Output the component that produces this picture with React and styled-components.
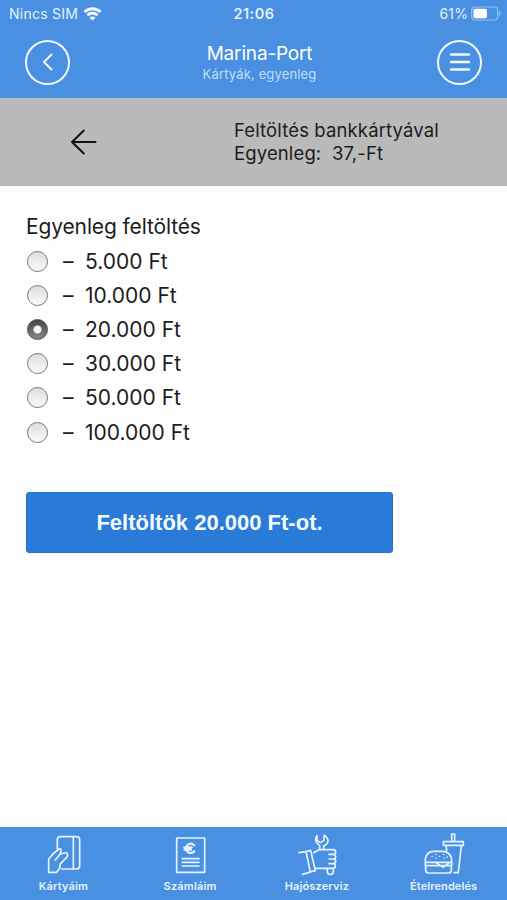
import React, { useState } from 'react';
import styled, { createGlobalStyle } from 'styled-components';

const GlobalStyle = createGlobalStyle`
  *, *::before, *::after { box-sizing: border-box; }
  html, body { margin: 0; padding: 0; background: #fff; }
  body { font-family: Inter, 'Liberation Sans', sans-serif; }
  button { font: inherit; border: 0; padding: 0; background: none; color: inherit; cursor: pointer; }
`;

const Screen = styled.div`
  display: flex;
  flex-direction: column;
  width: 507px;
  height: 900px;
  overflow: hidden;
  background: #fefefe;
  color: #1c1c1c;
`;

const Header = styled.header`
  height: 98px;
  flex: none;
  background: #4990e2;
  color: #fff;
`;

const StatusBar = styled.div`
  display: grid;
  grid-template-columns: 1fr auto 1fr;
  align-items: center;
  height: 27px;
  padding: 0 6px 0 9px;
  font-size: 14px;
  line-height: 27px;
  color: #e4f1fd;
`;

const StatusGroup = styled.div`
  display: flex;
  align-items: center;
  justify-content: ${(p) => (p.$end ? 'flex-end' : 'flex-start')};
  gap: ${(p) => (p.$end ? '3px' : '5px')};
  letter-spacing: ${(p) => (p.$end ? '0.1px' : '0.25px')};
`;

const Clock = styled.span`
  padding-right: 2px;
  font-size: 14.5px;
  font-weight: 600;
  letter-spacing: 0.5px;
`;

const NavBar = styled.div`
  display: flex;
  align-items: center;
  justify-content: space-between;
  height: 70px;
  padding: 0 25px 0 25px;
`;

const RoundButton = styled.button`
  display: grid;
  place-items: center;
  width: 45px;
  height: 45px;
  border: 2px solid #f0f8ff;
  border-radius: 50%;
`;

const TitleBlock = styled.div`
  display: flex;
  flex-direction: column;
  align-items: center;
  padding-left: 12px;
`;

const Title = styled.h1`
  margin: 0;
  font-size: 19px;
  line-height: 23px;
  font-weight: 400;
  letter-spacing: -0.17px;
`;

const Subtitle = styled.span`
  font-size: 13px;
  line-height: 18px;
  letter-spacing: 0.15px;
  color: #c5def7;
`;

const BalanceBar = styled.section`
  display: grid;
  grid-template-columns: 234px 1fr;
  align-items: center;
  height: 88px;
  flex: none;
  border-bottom: 1px solid #aeb0b2;
  background: #bababa;
`;

const BackArrow = styled.button`
  display: flex;
  padding-left: 70px;
`;

const BalanceText = styled.p`
  margin: 0;
  padding-top: 1px;
  font-size: 18.5px;
  line-height: 23px;
  letter-spacing: 0.13px;
  white-space: pre;
`;

const Content = styled.main`
  flex: 1;
  padding: 24px 26px 0;
`;

const OptionTitle = styled.h2`
  margin: 0;
  font-size: 21px;
  line-height: 34px;
  font-weight: 400;
  letter-spacing: -0.13px;
`;

const Option = styled.label`
  display: flex;
  align-items: center;
  height: 34.2px;
  font-size: 21px;
  white-space: pre;
`;

const Radio = styled.input`
  appearance: none;
  width: 21px;
  height: 21px;
  margin: 0 15px 0 1px;
  border: 1.5px solid #777;
  border-radius: 50%;
  background: linear-gradient(#dedede, #fafafa);
  &:checked {
    border-color: #505050;
    background: radial-gradient(circle, #f4f4f4 0 3.4px, transparent 4.6px), linear-gradient(#444, #888);
  }
`;

const Dash = styled.span`
  width: 22px;
`;

const SubmitButton = styled.button`
  display: block;
  width: 367px;
  height: 61px;
  margin-top: 43px;
  border: 1px solid #2570cb;
  border-radius: 3px;
  background: #2a7ad8;
  color: #f2faff;
  && {
    font: 700 22px 'Liberation Sans', Arial, sans-serif;
  }
`;

const TabBar = styled.nav`
  display: grid;
  grid-template-columns: repeat(4, 1fr);
  height: 73px;
  flex: none;
  background: #4990e2;
  color: #e4f3ff;
`;

const Tab = styled.button`
  display: flex;
  flex-direction: column;
  align-items: center;
  padding-top: 5px;
`;

const TabLabel = styled.span`
  margin-top: 2px;
  font-size: 11px;
  line-height: 16px;
  font-weight: 600;
  letter-spacing: ${(p) => p.$tracking};
`;

const TabIcon = styled.svg`
  display: block;
  width: 44px;
  height: 44px;
  fill: none;
  stroke: currentColor;
  stroke-width: 5;
  stroke-linecap: round;
  stroke-linejoin: round;
`;

const Battery = () => (
  <svg width="30" height="15" viewBox="0 0 30 15" fill="none">
    <rect x="0.7" y="1" width="26" height="13" rx="3.5" stroke="#8fc0f4" strokeWidth="1.2" />
    <rect x="2.4" y="2.8" width="13.6" height="9.4" rx="1.6" fill="#fff" />
    <path d="M28 5v5c2-.8 2-4.2 0-5z" fill="#8fc0f4" />
  </svg>
);

const Wifi = () => (
  <svg width="19" height="14" viewBox="0 0 19 14" fill="none" stroke="#f4faff" strokeWidth="2.8">
    <path d="M1.4 5.1C6 .6 13 .6 17.6 5.1" />
    <path d="M4.4 8.3c3-2.8 7.2-2.8 10.2 0" />
    <path d="M9.5 13.6 6.5 10.7c1.8-1.6 4.2-1.6 6 0z" fill="#f4faff" stroke="none" />
  </svg>
);

const CardIcon = () => (
  <TabIcon viewBox="0 0 132 132">
    <path d="M49 51V23q0-9 9-9h49q9 0 9 9v79q0 9-9 9H62M97 15v95" />
    <path d="M23 121V81l14-16 17-14q6-3 6 5l-3 11-14 17M57 67l12-4q10-3 11 5 0 4-4 9L57 97v10l-10 14H23" />
  </TabIcon>
);

const InvoiceIcon = () => (
  <TabIcon viewBox="-2 0 132 132">
    <path d="M24 18h84v103H24z" />
    <path d="M77 40c-14-11-24-2-24 9s10 20 24 9M47 46h22M47 53h20" strokeWidth="6.5" />
    <path d="M41 80h50M41 91h50M41 102h50" />
  </TabIcon>
);

const WrenchIcon = () => (
  <TabIcon viewBox="0 0 132 132">
    <path d="M12 62l21-3M22 127l21-6" />
    <path d="M33 59l14-4 14 61-15 4z" />
    <path d="M56 62l16-9h43q7 0 7 7t-7 7h-13M114 67q8 0 8 7t-8 7h-12M114 81q8 0 8 7t-8 7h-12M114 95q7 0 7 7t-7 7H61" />
    <path d="M74 52V40Q60 31 62 19l4-8v14l10 7 11-7V10q12 7 12 17 0 8-13 15v10M97 110v9q0 8 9 8t9-8v-10" />
  </TabIcon>
);

const FoodIcon = () => (
  <TabIcon viewBox="9 0 132 132">
    <path d="M19 91V83q2-25 26-25h25q24 0 28 25v8zM19 91v10h79V91M20 103v12q0 8 8 8h61q8 0 8-8v-12M51 92l21 14 19-14" />
    <path d="M73 29h60v11H73zM98 28V6h9v22M81 41l2 14M127 41l-9 81h-13" />
    <path d="M39 73h1M50 67h1M61 73h1M73 67h1M50 79h1M75 79h1M84 75h1" strokeWidth="4" />
  </TabIcon>
);

const amounts = ['5.000', '10.000', '20.000', '30.000', '50.000', '100.000'];

const tabs = [
  { label: 'Kártyáim', Icon: CardIcon, tracking: '0.15px' },
  { label: 'Számláim', Icon: InvoiceIcon, tracking: '0.2px' },
  { label: 'Hajószerviz', Icon: WrenchIcon, tracking: '0.15px' },
  { label: 'Ételrendelés', Icon: FoodIcon, tracking: '0.1px' },
];

export default function App() {
  const [amount, setAmount] = useState('20.000');
  return (
    <>
      <GlobalStyle />
      <Screen>
        <Header>
          <StatusBar>
            <StatusGroup><span>Nincs SIM</span><Wifi /></StatusGroup>
            <Clock>21:06</Clock>
            <StatusGroup $end><span>61%</span><Battery /></StatusGroup>
          </StatusBar>
          <NavBar>
            <RoundButton aria-label="Vissza">
              <svg width="12" height="18" viewBox="0 0 12 18" fill="none" stroke="#f4faff" strokeWidth="2" strokeLinecap="round" strokeLinejoin="round">
                <path d="M9.5 1.5 2 9l7.5 7.5" />
              </svg>
            </RoundButton>
            <TitleBlock>
              <Title>Marina-Port</Title>
              <Subtitle>Kártyák, egyenleg</Subtitle>
            </TitleBlock>
            <RoundButton aria-label="Menü">
              <svg width="22" height="20" viewBox="0 0 22 20" stroke="#f4faff" strokeWidth="2.4" strokeLinecap="round">
                <path d="M2 2.5h18M2 10h18M2 17.5h18" />
              </svg>
            </RoundButton>
          </NavBar>
        </Header>
        <BalanceBar>
          <BackArrow aria-label="Vissza">
            <svg width="28" height="28" viewBox="0 0 28 28" fill="none" stroke="#111" strokeWidth="2" strokeLinecap="round" strokeLinejoin="round">
              <path d="M13.8 2.5 2 14l11.8 11.5M2 14h23.5" />
            </svg>
          </BackArrow>
          <BalanceText>{'Feltöltés bankkártyával\nEgyenleg:  37,-Ft'}</BalanceText>
        </BalanceBar>
        <Content>
          <OptionTitle>Egyenleg feltöltés</OptionTitle>
          {amounts.map((value) => (
            <Option key={value}>
              <Radio type="radio" name="amount" checked={amount === value} onChange={() => setAmount(value)} />
              <Dash>–</Dash>
              <span>{value} Ft</span>
            </Option>
          ))}
          <SubmitButton>Feltöltök {amount} Ft-ot.</SubmitButton>
        </Content>
        <TabBar>
          {tabs.map(({ label, Icon, tracking }) => (
            <Tab key={label}>
              <Icon />
              <TabLabel $tracking={tracking}>{label}</TabLabel>
            </Tab>
          ))}
        </TabBar>
      </Screen>
    </>
  );
}
